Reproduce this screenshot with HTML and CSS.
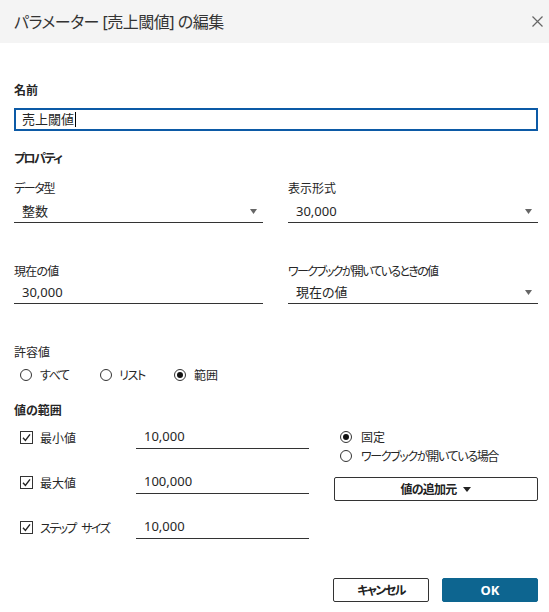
FILE: index.html
```html
<!DOCTYPE html>
<html lang="ja">
<head>
<meta charset="utf-8">
<title>パラメーターの編集</title>
<link rel="stylesheet" href="styles.css">
</head>
<body>
<div class="dialog">
  <header class="hdr">
    <h1 class="title">パラメーター [売上閾値] の編集</h1>
    <span class="close"><svg width="11" height="11" viewBox="0 0 11 11"><path d="M0.5 0.5 L10.5 10.5 M10.5 0.5 L0.5 10.5" stroke="#666" stroke-width="1.2" fill="none"/></svg></span>
  </header>
  <main class="content">
    <div class="label bold l-name">名前</div>
    <div class="name-input"><span>売上閾値</span><span class="caret"></span></div>

    <div class="label bold l-props ls3">プロパティ</div>
    <div class="grid row1">
      <div class="field">
        <div class="label ls2">データ型</div>
        <div class="select"><span>整数</span><svg class="arrow" width="7" height="5" viewBox="0 0 7 5"><polygon points="0,0 7,0 3.5,5" fill="#666"/></svg></div>
      </div>
      <div class="field">
        <div class="label">表示形式</div>
        <div class="select"><span>30,000</span><svg class="arrow" width="7" height="5" viewBox="0 0 7 5"><polygon points="0,0 7,0 3.5,5" fill="#666"/></svg></div>
      </div>
    </div>
    <div class="grid row2">
      <div class="field">
        <div class="label ls1">現在の値</div>
        <div class="select"><span>30,000</span></div>
      </div>
      <div class="field">
        <div class="label ls4">ワークブックが開いているときの値</div>
        <div class="select"><span>現在の値</span><svg class="arrow" width="7" height="5" viewBox="0 0 7 5"><polygon points="0,0 7,0 3.5,5" fill="#666"/></svg></div>
      </div>
    </div>

    <div class="label l-allow">許容値</div>
    <div class="radios">
      <label class="radio r-all"><span class="dot"></span><span class="ls2">すべて</span></label>
      <label class="radio r-list"><span class="dot"></span><span class="ls2">リスト</span></label>
      <label class="radio r-range"><span class="dot on"></span>範囲</label>
    </div>

    <div class="label bold l-range">値の範囲</div>
    <div class="range">
      <div class="range-left">
        <div class="crow">
          <div class="cb"><span class="box"><svg width="13" height="13" viewBox="0 0 13 13"><polyline points="3,6.8 5.4,9.4 10,3.4" fill="none" stroke="#222" stroke-width="1.4"/></svg></span>最小値</div>
          <div class="num">10,000</div>
        </div>
        <div class="crow">
          <div class="cb"><span class="box"><svg width="13" height="13" viewBox="0 0 13 13"><polyline points="3,6.8 5.4,9.4 10,3.4" fill="none" stroke="#222" stroke-width="1.4"/></svg></span>最大値</div>
          <div class="num">100,000</div>
        </div>
        <div class="crow">
          <div class="cb"><span class="box"><svg width="13" height="13" viewBox="0 0 13 13"><polyline points="3,6.8 5.4,9.4 10,3.4" fill="none" stroke="#222" stroke-width="1.4"/></svg></span><span class="ls3 ws">ステップ サイズ</span></div>
          <div class="num">10,000</div>
        </div>
      </div>
      <div class="range-right">
        <label class="radio rr"><span class="dot on"></span>固定</label>
        <label class="radio rr"><span class="dot"></span><span class="ls2">ワークブックが開いている場合</span></label>
        <button class="btn add"><span class="ls1">値の追加元</span><svg class="tri" width="8" height="5" viewBox="0 0 8 5"><polygon points="0,0 8,0 4,5" fill="#222"/></svg></button>
      </div>
    </div>
  </main>
  <footer class="footer">
    <button class="btn cancel"><span class="ls3">キャンセル</span></button>
    <button class="btn ok">OK</button>
  </footer>
</div>
</body>
</html>
```
FILE: styles.css
```css
* { box-sizing: border-box; }
html, body { margin: 0; padding: 0; background: #fff; }
body {
  font-family: "Noto Sans", "Noto Sans CJK JP", sans-serif;
  font-feature-settings: "palt";
  color: #262626;
  font-size: 12px;
}
.dialog { width: 549px; height: 612px; }
.hdr {
  height: 43px;
  background: #f4f4f4;
  display: flex;
  align-items: center;
  justify-content: space-between;
  padding: 0 6px 0 14px;
}
.title {
  margin: 0;
  font-size: 16px;
  font-weight: 400;
  color: #333;
  line-height: 20px;
  letter-spacing: -0.5px;
}
.close { display: flex; width: 11px; height: 11px; }
.content { padding: 0 11px 0 14px; }
.label { height: 16px; line-height: 16px; font-size: 12px; white-space: nowrap; }
.bold { font-weight: 700; }
.ls1 { letter-spacing: -0.8px; }
.ls2 { letter-spacing: -1.35px; }
.ls3 { letter-spacing: -1.6px; }
.ls4 { letter-spacing: -1.7px; }
.ws { word-spacing: 4px; }
.l-name { margin-top: 40px; }
.name-input {
  margin-top: 9px;
  height: 23px;
  border: 2px solid #0c5aa6;
  padding: 0 6px;
  display: flex;
  align-items: center;
  font-size: 13px;
  line-height: 19px;
}
.caret { width: 1px; height: 15px; background: #000; margin-left: 1px; }
.l-props { margin-top: 20px; }
.grid { display: grid; grid-template-columns: 249px 250px; column-gap: 25px; }
.row1 { margin-top: 14px; }
.row2 { margin-top: 41px; }
.row2 .select { margin-top: 1px; }
.select {
  margin-top: 3px;
  height: 23px;
  border-bottom: 1px solid #333;
  display: flex;
  align-items: center;
  justify-content: space-between;
  padding: 0 6px 0 8px;
  font-size: 13px;
  line-height: 22px;
}
.arrow { display: block; }
.l-allow { margin-top: 41px; }
.radios { margin-top: 4px; height: 20px; display: flex; align-items: center; padding-left: 6px; }
.radio { display: flex; align-items: center; gap: 8px; font-size: 12px; white-space: nowrap; }
.r-all { width: 80px; }
.r-list { width: 74px; gap: 7px; }
.dot {
  width: 12px; height: 12px;
  border: 1px solid #333;
  border-radius: 50%;
  display: flex; align-items: center; justify-content: center;
  flex: none;
}
.dot.on::after {
  content: "";
  width: 6px; height: 6px;
  border-radius: 50%;
  background: #111;
}
.l-range { margin-top: 18px; }
.range { margin-top: 5px; display: flex; }
.range-left { width: 320px; display: flex; flex-direction: column; gap: 20px; }
.crow { display: flex; height: 25px; padding-left: 6px; }
.cb { width: 116px; display: flex; align-items: center; gap: 7px; padding-top: 2px; white-space: nowrap; }
.box {
  width: 13px; height: 13px;
  border: 1px solid #333;
  display: flex; flex: none;
  align-items: center; justify-content: center;
}
.box svg { display: block; margin: -1px; }
.num {
  width: 173px;
  height: 25px;
  border-bottom: 1px solid #333;
  padding-left: 8px;
  font-size: 13px;
  line-height: 24px;
}
.range-right { width: 204px; display: flex; flex-direction: column; padding-top: 3px; }
.rr { height: 19px; padding-left: 6px; gap: 9px; }
.btn {
  font-family: inherit;
  font-feature-settings: "palt";
  font-weight: 700;
  font-size: 12px;
  color: #222;
  background: #fff;
  border: 1px solid #333;
  border-radius: 2px;
  height: 24px;
  padding: 0;
  display: flex; align-items: center; justify-content: center;
}
.add { margin-top: 12px; width: 204px; gap: 7px; }
.tri { display: block; }
.footer { margin-top: 39px; display: flex; justify-content: flex-end; gap: 13px; padding-right: 11px; }
.cancel { width: 96px; }
.ok { width: 96px; background: #0d6590; border-color: #0d6590; color: #fff; font-size: 13px; }
```
